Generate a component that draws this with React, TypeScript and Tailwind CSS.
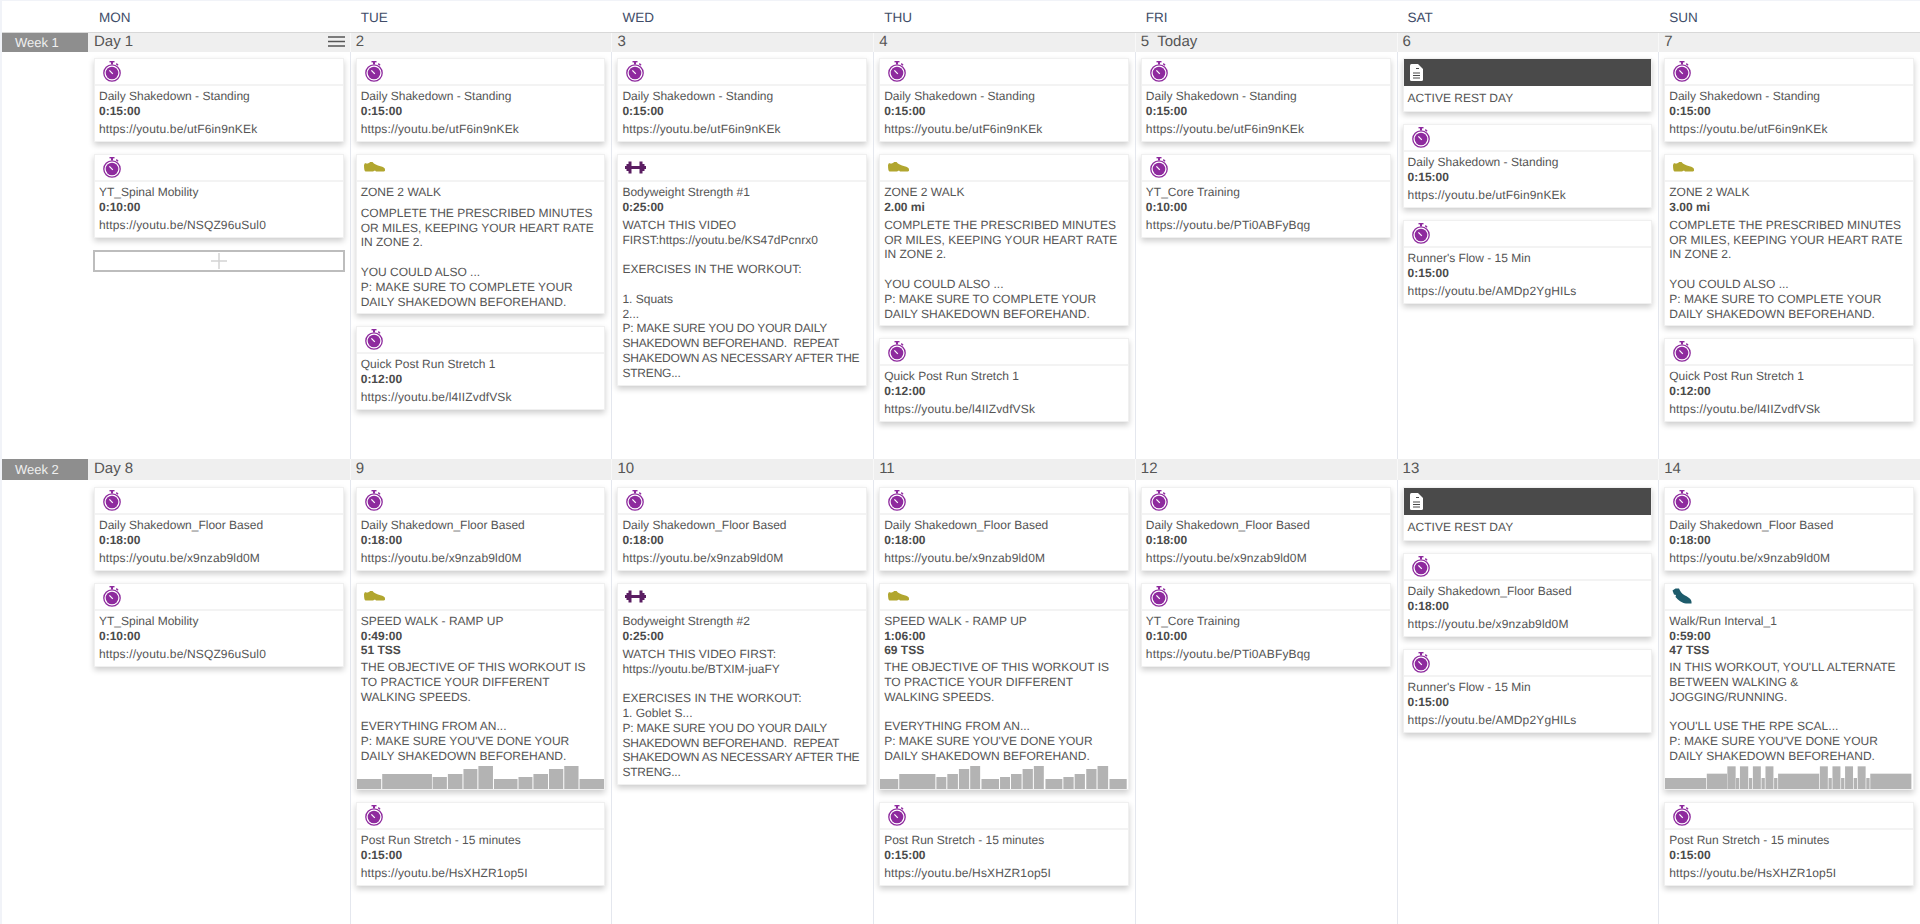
import type { ReactNode } from "react";

type Bar = [number, number, number];

type Workout = {
  kind: "timer" | "walk" | "strength" | "run" | "note";
  title: string;
  meta?: string[];
  body?: string;
  tail?: string;
  bars?: Bar[];
  barsFrom?: number;
};

const walkBars: Bar[] = [
  [17, 90, 30], [93, 243, 45], [245, 288, 36], [291, 335, 45], [338, 380, 60], [383, 427, 69],
  [430, 501, 30], [504, 546, 36], [549, 593, 45], [596, 639, 60], [642, 685, 69], [688, 762, 30],
];

const longWalkBars: Bar[] = [
  [13, 68, 30], [71, 180, 45], [183, 213, 36], [216, 248, 45], [251, 282, 60], [285, 315, 69],
  [319, 372, 30], [375, 405, 36], [408, 440, 45], [443, 474, 60], [477, 507, 69],
  [512, 563, 30], [566, 597, 36], [600, 631, 45], [635, 666, 60], [669, 701, 69], [705, 757, 30],
];

const intervalBars: Bar[] = [
  [44, 168, 33], [170, 231, 46], [232, 257, 68], [258, 268, 33], [270, 295, 68], [297, 307, 33],
  [309, 333, 68], [335, 345, 33], [347, 371, 68], [373, 383, 33], [385, 509, 46], [511, 535, 68],
  [537, 547, 33], [549, 573, 68], [575, 585, 33], [587, 611, 68], [613, 623, 33], [625, 649, 68],
  [651, 661, 33], [663, 787, 46],
];

const zone2 = "COMPLETE THE PRESCRIBED MINUTES OR MILES, KEEPING YOUR HEART RATE IN ZONE 2.\n\nYOU COULD ALSO ...\nP: MAKE SURE TO COMPLETE YOUR DAILY SHAKEDOWN BEFOREHAND.";
const speedWalk = "THE OBJECTIVE OF THIS WORKOUT IS TO PRACTICE YOUR DIFFERENT WALKING SPEEDS.\n\nEVERYTHING FROM AN...\nP: MAKE SURE YOU'VE DONE YOUR DAILY SHAKEDOWN BEFOREHAND.";
const strengthNote = "P: MAKE SURE YOU DO YOUR DAILY SHAKEDOWN BEFOREHAND.  REPEAT SHAKEDOWN AS NECESSARY AFTER THE STRENG...";

const standing: Workout = { kind: "timer", title: "Daily Shakedown - Standing", meta: ["0:15:00"], body: "https://youtu.be/utF6in9nKEk" };
const floor: Workout = { kind: "timer", title: "Daily Shakedown_Floor Based", meta: ["0:18:00"], body: "https://youtu.be/x9nzab9ld0M" };
const spinal: Workout = { kind: "timer", title: "YT_Spinal Mobility", meta: ["0:10:00"], body: "https://youtu.be/NSQZ96uSul0" };
const core: Workout = { kind: "timer", title: "YT_Core Training", meta: ["0:10:00"], body: "https://youtu.be/PTi0ABFyBqg" };
const flow: Workout = { kind: "timer", title: "Runner's Flow - 15 Min", meta: ["0:15:00"], body: "https://youtu.be/AMDp2YgHILs" };
const quick: Workout = { kind: "timer", title: "Quick Post Run Stretch 1", meta: ["0:12:00"], body: "https://youtu.be/l4IIZvdfVSk" };
const postRun: Workout = { kind: "timer", title: "Post Run Stretch - 15 minutes", meta: ["0:15:00"], body: "https://youtu.be/HsXHZR1op5I" };
const rest: Workout = { kind: "note", title: "ACTIVE REST DAY" };

const days = ["MON", "TUE", "WED", "THU", "FRI", "SAT", "SUN"];

const weeks: { label: string; barClass: string; rowClass: string; padClass: string; dates: string[]; columns: Workout[][] }[] = [
  {
    label: "Week 1",
    barClass: "h-[19px]",
    rowClass: "h-[426px]",
    padClass: "pt-[6px]",
    dates: ["Day 1", "2", "3", "4", "5  Today", "6", "7"],
    columns: [
      [standing, spinal],
      [standing, { kind: "walk", title: "ZONE 2 WALK", body: zone2 }, quick],
      [
        standing,
        {
          kind: "strength",
          title: "Bodyweight Strength #1",
          meta: ["0:25:00"],
          body: "WATCH THIS VIDEO FIRST:https://youtu.be/KS47dPcnrx0\n\nEXERCISES IN THE WORKOUT:\n\n1. Squats\n2...\n",
          tail: strengthNote,
        },
      ],
      [standing, { kind: "walk", title: "ZONE 2 WALK", meta: ["2.00 mi"], body: zone2 }, quick],
      [standing, core],
      [rest, standing, flow],
      [standing, { kind: "walk", title: "ZONE 2 WALK", meta: ["3.00 mi"], body: zone2 }, quick],
    ],
  },
  {
    label: "Week 2",
    barClass: "h-[21px]",
    rowClass: "flex-1",
    padClass: "pt-[7px]",
    dates: ["Day 8", "9", "10", "11", "12", "13", "14"],
    columns: [
      [floor, spinal],
      [floor, { kind: "walk", title: "SPEED WALK - RAMP UP", meta: ["0:49:00", "51 TSS"], body: speedWalk, bars: walkBars, barsFrom: 17 }, postRun],
      [
        floor,
        {
          kind: "strength",
          title: "Bodyweight Strength #2",
          meta: ["0:25:00"],
          body: "WATCH THIS VIDEO FIRST: https://youtu.be/BTXIM-juaFY\n\nEXERCISES IN THE WORKOUT:\n1. Goblet S...\n",
          tail: strengthNote,
        },
      ],
      [floor, { kind: "walk", title: "SPEED WALK - RAMP UP", meta: ["1:06:00", "69 TSS"], body: speedWalk, bars: longWalkBars, barsFrom: 13 }, postRun],
      [floor, core],
      [rest, floor, flow],
      [
        floor,
        {
          kind: "run",
          title: "Walk/Run Interval_1",
          meta: ["0:59:00", "47 TSS"],
          body: "IN THIS WORKOUT, YOU'LL ALTERNATE BETWEEN WALKING & JOGGING/RUNNING.\n\nYOU'LL USE THE RPE SCAL...\nP: MAKE SURE YOU'VE DONE YOUR DAILY SHAKEDOWN BEFOREHAND.",
          bars: intervalBars,
          barsFrom: 44,
        },
        postRun,
      ],
    ],
  },
];

function TimerIcon() {
  return (
    <svg width="18" height="21" viewBox="0 0 18 21" className="ml-[8px] text-[#8e2a9e]" fill="currentColor">
      <rect x="6.5" y="0" width="5" height="1.4" />
      <rect x="8" y="1" width="2" height="2.4" />
      <rect x="13" y="2.6" width="2.4" height="1.4" transform="rotate(40 14 3.3)" />
      <circle cx="9" cy="12" r="8.2" fill="none" stroke="currentColor" strokeWidth="1.3" />
      <circle cx="9" cy="12" r="6.3" />
      <path d="M6.4 9.4 L9.8 12.8" stroke="#fff" strokeWidth="1.2" />
    </svg>
  );
}

function WalkIcon() {
  return (
    <svg width="21" height="10" viewBox="0 0 21 10" className="ml-[7.5px] text-[#b1a62f]" fill="currentColor">
      <path d="M0 3 L1 1 C3 2 5 1.5 6 0 L8.5 0 C10 2 13 3.5 16.5 4.2 C19 4.7 21 5.7 21 7.5 L21 8.5 C21 9.3 20 9.5 19 9.5 L12 9.5 L11 8.5 L9 9.5 L1.5 9.5 C0.5 9.5 0 7 0 3 Z" />
    </svg>
  );
}

function StrengthIcon() {
  return (
    <svg width="21" height="13" viewBox="0 0 21 13" className="ml-[6.5px] text-[#5b1e62]" fill="currentColor">
      <path d="M0 5 H1.5 V3 H3.5 V0.5 H6.5 V5 H14.5 V0.5 H17.5 V3 H19.5 V5 H21 V8 H19.5 V10 H17.5 V12.5 H14.5 V8 H6.5 V12.5 H3.5 V10 H1.5 V8 H0 Z" />
    </svg>
  );
}

function RunIcon() {
  return (
    <svg width="20" height="16" viewBox="0 0 20 16" className="ml-[7px] text-[#1d5b6b]" fill="currentColor">
      <path d="M0.5 2.5 L3.5 0.5 L7 0.5 C8 3 9.5 5.5 13 7.5 C16 9 19.5 11 19.5 14 L19.5 15.5 L14 15.5 C10 15 6 12 3.5 9 L4 7 L2 6.5 Z" />
    </svg>
  );
}

function NoteIcon() {
  return (
    <svg width="13" height="17" viewBox="0 0 13 17" className="ml-[6.5px]">
      <path d="M0 1.5 Q0 0 1.5 0 H8 L13 5 V15.5 Q13 17 11.5 17 H1.5 Q0 17 0 15.5 Z" fill="#fff" />
      <path d="M6 4.5 H9 M3 9 H10 M3 11.5 H10 M3 14 H10" stroke="#4a4a4a" strokeWidth="1" />
    </svg>
  );
}

const icons: Record<Workout["kind"], ReactNode> = {
  timer: <TimerIcon />,
  walk: <WalkIcon />,
  strength: <StrengthIcon />,
  run: <RunIcon />,
  note: <NoteIcon />,
};

function Chart({ bars, from }: { bars: Bar[]; from: number }) {
  return (
    <svg viewBox={`${from} 0 747 69`} className="mt-[2px] block w-full h-[23px]" preserveAspectRatio="none">
      {bars.map(([start, end, height]) => (
        <rect key={start} x={start} y={69 - height} width={end - start} height={height} fill="#b3b3b3" />
      ))}
    </svg>
  );
}

function WorkoutCard({ workout }: { workout: Workout }) {
  const isNote = workout.kind === "note";
  const isUrl = workout.body?.startsWith("https");
  const bodyGap = workout.bars ? "mt-[2.5px]" : workout.meta ? "mt-[3.5px]" : "mt-[6px]";
  return (
    <div className="bg-white border border-[#f0f0f0] shadow-[0_3px_6px_rgba(0,0,0,0.2)]">
      <div className={`h-[27px] flex items-center ${isNote ? "bg-[#4a4a4a]" : "border-b-2 border-[#f3f3f3]"}`}>
        {icons[workout.kind]}
      </div>
      <div className={isNote ? "pt-[5px] pb-[5px]" : workout.bars ? "pt-[3px]" : "pt-[3px] pb-[4px]"}>
        <div className="px-[4px] leading-[15px]">{workout.title}</div>
        {workout.meta?.map((line) => (
          <div key={line} className="px-[4px] leading-[14.5px] font-bold text-[#4a4a4a]">
            {line}
          </div>
        ))}
        {workout.body && (
          <div className={`px-[4px] leading-[14.8px] whitespace-pre-wrap ${bodyGap} ${isUrl ? "tracking-[0.15px]" : ""}`}>
            {workout.body}
            {workout.tail && <span className="tracking-[-0.2px]">{workout.tail}</span>}
          </div>
        )}
        {workout.bars && <Chart bars={workout.bars} from={workout.barsFrom ?? 0} />}
      </div>
    </div>
  );
}

function AddButton() {
  return (
    <div className="h-[22px] -mx-[1px] border-2 border-[#bdbdbd] flex items-center justify-center">
      <svg width="16" height="16" viewBox="0 0 16 16" stroke="#d4d4d4" strokeWidth="1.5">
        <path d="M8 0 V16 M0 8 H16" />
      </svg>
    </div>
  );
}

export default function App() {
  return (
    <div className="h-screen overflow-hidden bg-white flex flex-col border-l-2 border-t border-[#f1f3f8] text-[12px] text-[#555] font-['Liberation_Sans',Arial,sans-serif] [text-rendering:geometricPrecision]">
      <div className="grid grid-cols-[86px_repeat(7,1fr)] h-[32px] border-b border-[#d8d8d8]">
        <div />
        {days.map((day) => (
          <div key={day} className="pl-[11px] pt-[9px] text-[13.5px] leading-[15px] text-[#404c68]">
            {day}
          </div>
        ))}
      </div>
      {weeks.map((week) => (
        <div key={week.label} className={`grid grid-cols-[86px_repeat(7,1fr)] grid-rows-[auto_1fr] ${week.rowClass} overflow-hidden`}>
          <div className={`${week.barClass} bg-[#8e8e8e] text-[#f0f0f0] text-[13px] flex items-center pl-[13px]`}>
            {week.label}
          </div>
          {week.dates.map((date, index) => (
            <div
              key={date}
              className={`${week.barClass} relative bg-[#efefef] text-[15px] flex items-center whitespace-pre ${index === 0 ? "pl-[6px]" : "pl-[5px] border-l border-[#f8f8f8]"}`}
            >
              {date}
              {index === 0 && week.label === "Week 1" && (
                <svg width="17" height="11" viewBox="0 0 17 11" stroke="#555" strokeWidth="1.5" className="absolute right-[5px] top-[3px]">
                  <path d="M0 1 H17 M0 5.5 H17 M0 10 H17" />
                </svg>
              )}
            </div>
          ))}
          <div />
          {week.columns.map((column, index) => (
            <div
              key={index}
              className={`flex flex-col gap-[12px] pr-[6px] ${week.padClass} min-w-0 ${index === 0 ? "pl-[6px]" : "pl-[5px] border-l border-[#e4e7ee]"}`}
            >
              {column.map((workout, cardIndex) => (
                <WorkoutCard key={cardIndex} workout={workout} />
              ))}
              {index === 0 && week.label === "Week 1" && <AddButton />}
            </div>
          ))}
        </div>
      ))}
    </div>
  );
}
